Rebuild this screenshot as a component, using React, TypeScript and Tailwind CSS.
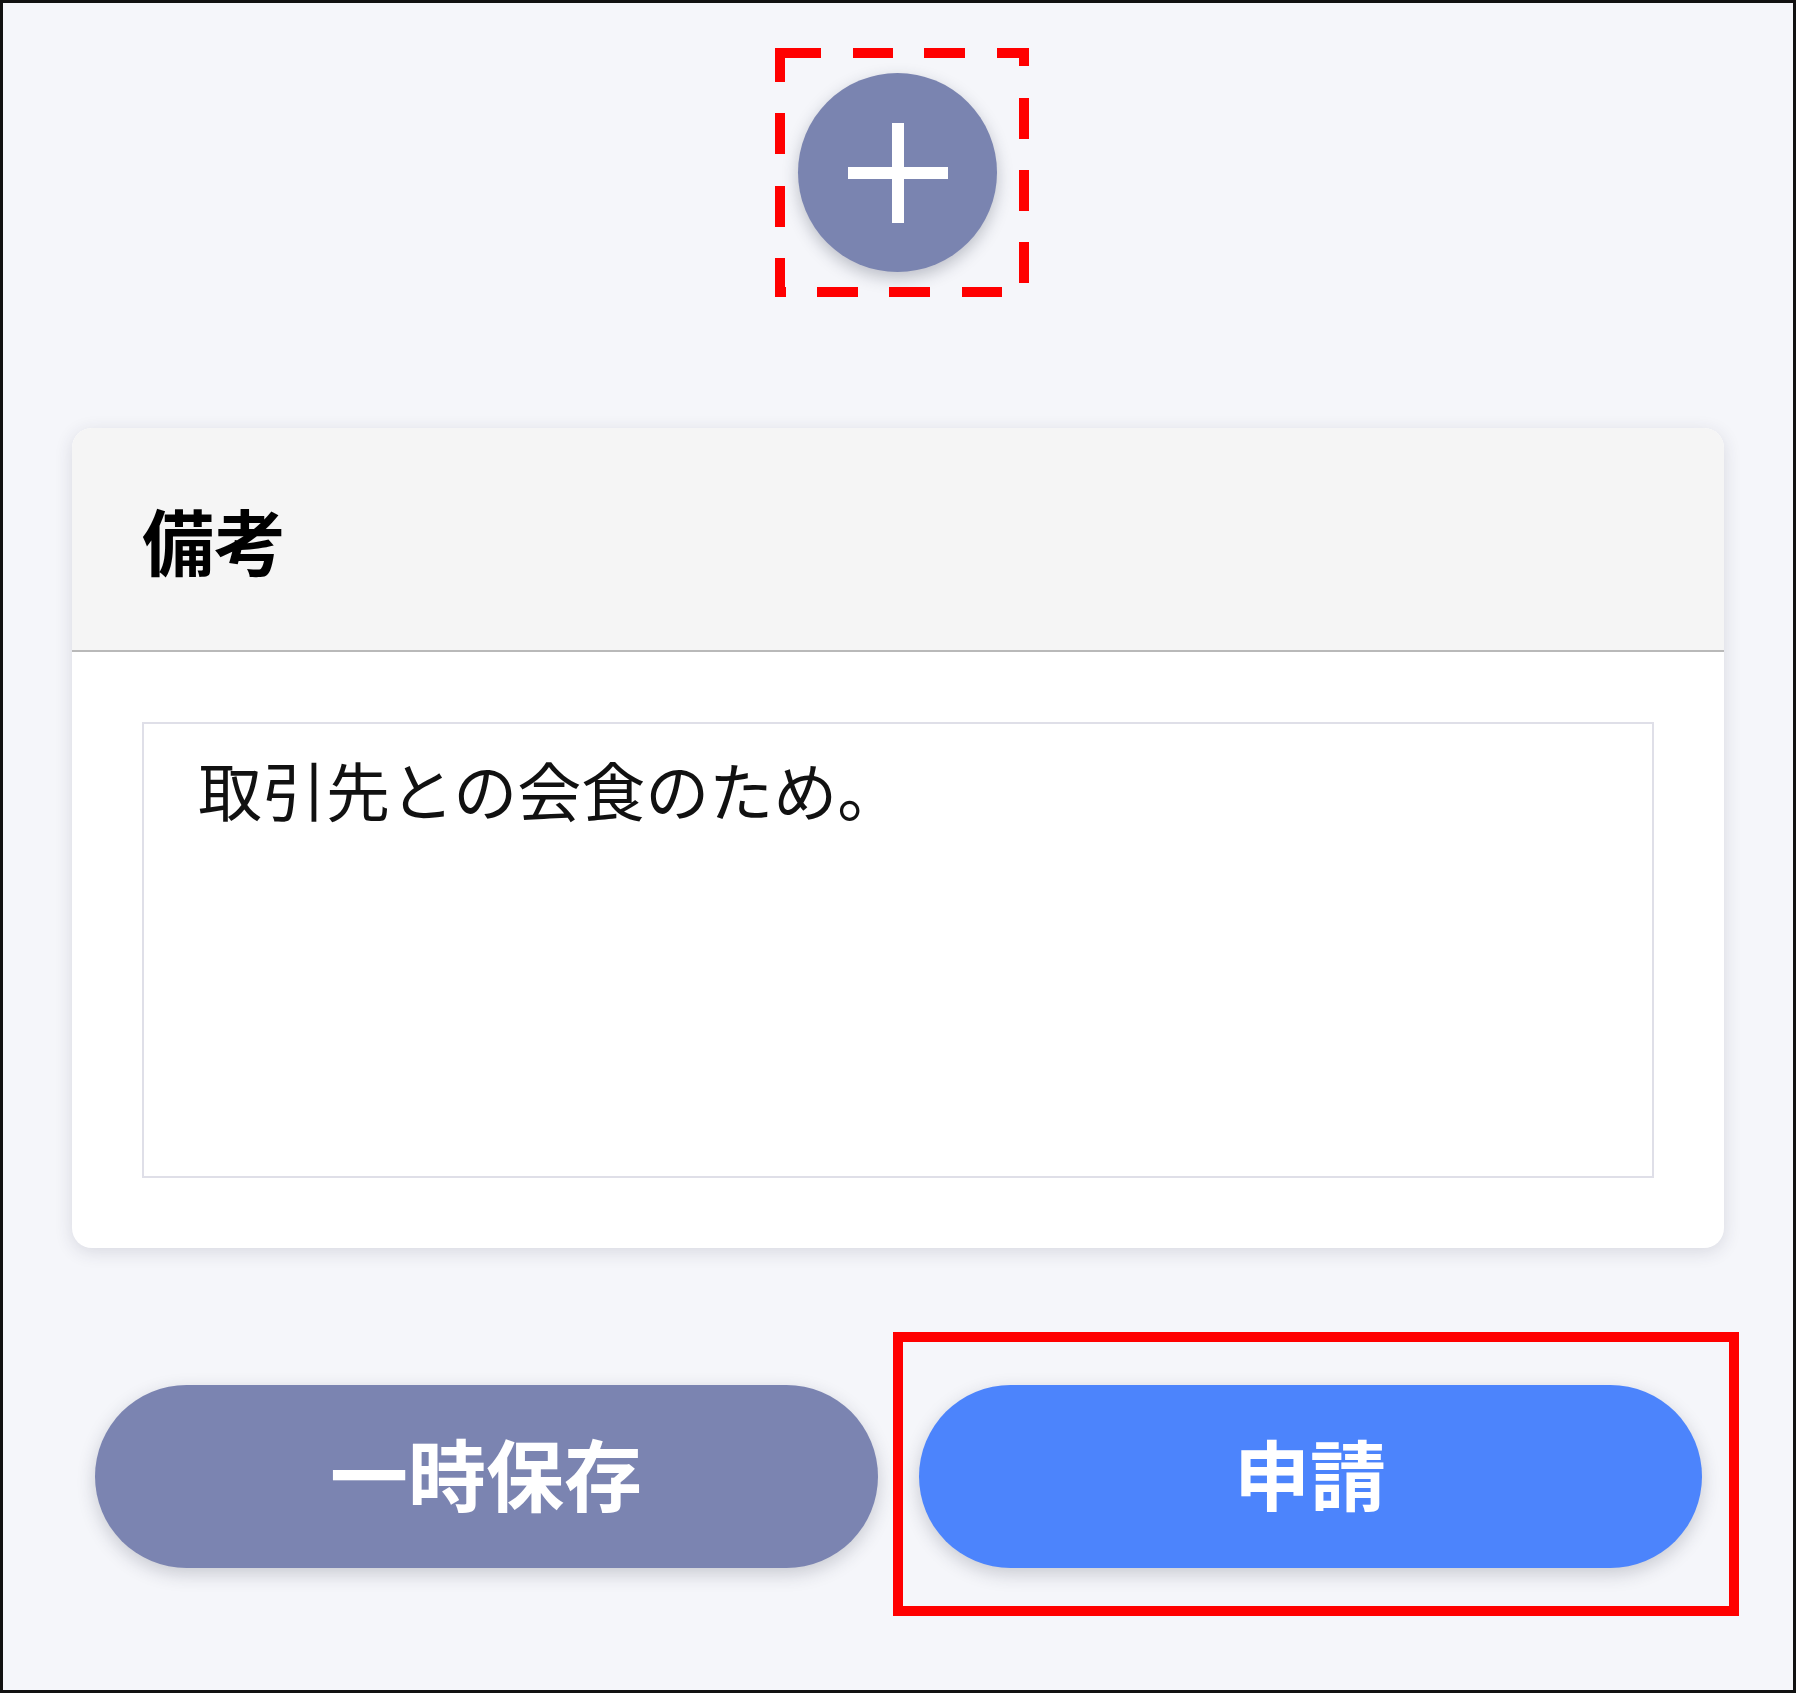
import React from 'react';

const font = { fontFamily: '"Noto Sans CJK JP", "Noto Sans", sans-serif' };

function PlusButton() {
  return (
    <div className="relative w-[254px] h-[249px] mt-[45px] ml-[8px] pl-[23px] pt-[25px]">
      {/* annotation: dashed marker, each edge dashed on its own */}
      <svg className="absolute inset-0 pointer-events-none" width="254" height="249" viewBox="0 0 254 249">
        <g stroke="#ff0000" strokeWidth="10" fill="none">
          <line x1="0" y1="5" x2="254" y2="5" strokeDasharray="46 32 40 31 41 32 32" />
          <line x1="249" y1="0" x2="249" y2="249" strokeDasharray="18 32 41 31 41 31 41 100" />
          <line x1="0" y1="244" x2="254" y2="244" strokeDasharray="11 31 41 31 41 32 40 100" />
          <line x1="5" y1="0" x2="5" y2="249" strokeDasharray="34 31 41 32 41 31 39" />
        </g>
      </svg>
      <button className="w-[199px] h-[199px] rounded-full bg-[#7a84b0] shadow-[0_6px_16px_rgba(40,45,70,0.28)] flex items-center justify-center">
        <svg width="100" height="100" viewBox="0 0 100 100">
          <rect x="0" y="44" width="100" height="12" fill="#fff" />
          <rect x="44" y="0" width="12" height="100" fill="#fff" />
        </svg>
      </button>
    </div>
  );
}

export default function App() {
  return (
    <div
      className="w-full h-[1693px] border-[3px] border-[#111] bg-[#f5f6fa] flex flex-col items-center"
      style={font}
    >
      <PlusButton />

      {/* Remarks card */}
      <div className="mt-[131px] w-[1652px] bg-white rounded-[20px] overflow-hidden shadow-[0_4px_18px_rgba(40,45,70,0.14)]">
        <div className="h-[224px] bg-[#f5f5f5] border-b-2 border-[#b9b9b9] pl-[70px] flex items-center">
          <h2 className="text-[72px] font-bold text-black leading-none">備考</h2>
        </div>
        <div className="p-[70px]">
          <div className="h-[456px] border-2 border-[#dfdfe8] pl-[54px] pt-[16px] text-[64px] leading-[1.5] text-[#111]">
            取引先との会食のため。
          </div>
        </div>
      </div>

      {/* Actions */}
      <div className="mt-[137px] flex gap-[41px]">
        <button className="w-[783px] h-[183px] rounded-full bg-[#7b84b1] text-white text-[78px] font-bold leading-none pb-[10px] shadow-[0_6px_18px_rgba(40,45,70,0.22)]">
          一時保存
        </button>
        <div className="relative">
          <button className="w-[783px] h-[183px] rounded-full bg-[#4c84fc] text-white text-[76px] font-bold leading-none pb-[10px] shadow-[0_6px_18px_rgba(40,45,70,0.22)]">
            申請
          </button>
          <div className="absolute -left-[26px] -right-[37px] -top-[53px] -bottom-[48px] border-[10px] border-[#ff0000] pointer-events-none" />
        </div>
      </div>
    </div>
  );
}
